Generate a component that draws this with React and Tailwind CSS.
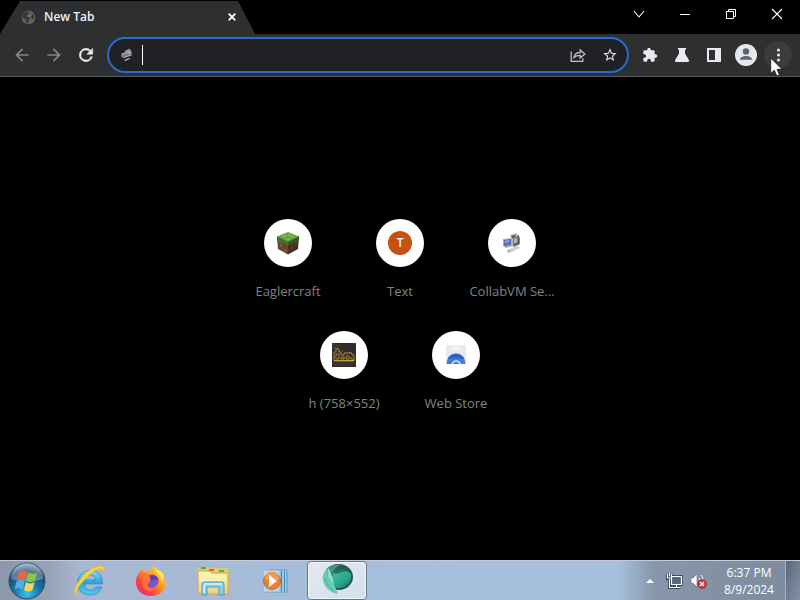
import React from "react";

function Svg({ size, box = 24, className = "", children }) {
  return (
    <svg width={size} height={size} viewBox={`0 0 ${box} ${box}`} className={`shrink-0 ${className}`} fill="currentColor" aria-hidden="true">
      {children}
    </svg>
  );
}

function GlobeIcon() {
  return (
    <Svg size={15} box={16} className="text-[#77797c]">
      <circle cx="8" cy="8" r="7.3" fill="#606264" />
      <path d="M3 3.5C5 1.8 7 1.6 8.5 2L8 4.4 6 5.4 6.2 7.4 9 8 9.6 9.6 8.2 11 7.6 14.4C4.6 13.4 6 10.6 4.4 9.6L1.6 8.4C1.4 6 2 4.4 3 3.5Z" fill="#343638" />
      <path d="M11 3.2L13.4 5 14.2 8.6 12.2 9.6 10.4 7.4 12 6Z" fill="#343638" />
    </Svg>
  );
}

function CaptionButton({ label, children }) {
  return (
    <button type="button" aria-label={label} className="flex h-7 w-[46px] items-center justify-center text-white">
      <svg width="12" height="12" viewBox="0 0 12 12" fill="none" stroke="currentColor" strokeWidth="1" aria-hidden="true">
        {children}
      </svg>
    </button>
  );
}

function TitleBar() {
  return (
    <header className="flex h-[34px] items-start justify-between">
      <div className="flex h-[34px] w-[255px] items-center bg-[#2e2f30] pr-[17px] pl-[21px] [clip-path:polygon(20px_1px,238px_1px,255px_100%,0_100%)]">
        <GlobeIcon />
        <h1 className="ml-2 flex-1 font-['Open_Sans','Noto_Sans',sans-serif] text-xs leading-4 font-semibold text-[#f2f2f2]">New Tab</h1>
        <button type="button" aria-label="Close tab" className="flex size-3 items-center justify-center text-white">
          <svg width="8" height="8" viewBox="0 0 8 8" stroke="currentColor" strokeWidth="1.9" aria-hidden="true">
            <path d="M.7.7l6.6 6.6M7.3.7L.7 7.3" />
          </svg>
        </button>
      </div>
      <div className="flex">
        <CaptionButton label="Search tabs"><path d="M1 3l5 6 5-6" strokeWidth="1.1" /></CaptionButton>
        <CaptionButton label="Minimize"><path d="M1 6.5h10" /></CaptionButton>
        <CaptionButton label="Restore">
          <path d="M1.5 3.5h7v7h-7zM3.5 3.5v-2h7v7h-2" />
        </CaptionButton>
        <CaptionButton label="Close"><path d="M1 1l10 10M11 1L1 11" strokeWidth="1.1" /></CaptionButton>
      </div>
    </header>
  );
}

function ToolButton({ label, className = "", children }) {
  return (
    <button type="button" aria-label={label} className={`flex size-8 shrink-0 items-center justify-center ${className}`}>
      {children}
    </button>
  );
}

function Pointer() {
  return (
    <svg width="14" height="21" viewBox="0 0 14 21" className="pointer-events-none absolute top-[18px] left-2" aria-hidden="true">
      <path d="M.7 1v15.6l3.6-3.4 2.4 5.8 2.8-1.2-2.4-5.5h5z" fill="#fff" stroke="#111" strokeWidth=".8" />
    </svg>
  );
}

function ComputerMark() {
  return (
    <svg width="14" height="14" viewBox="0 0 14 14" className="shrink-0" aria-hidden="true">
      <path d="M5 2.5L10 .6l.8 2L5 5z" fill="#8f8f8f" />
      <path d="M1.500 5.500L10 2.500l1.500 1v4L4 10l-2.500-1z" fill="#a9a9a9" />
      <path d="M2.500 6.200l5-1.800v3l-5 1.600z" fill="#8a8a8a" />
      <path d="M4 12l5-2 1.500.6-5 2.400z" fill="#b5b5b5" />
      <path d="M2 8.500l9-3" stroke="#5a5a5a" strokeWidth=".7" />
    </svg>
  );
}

function Toolbar() {
  return (
    <div className="flex h-[43px] items-center border-b border-[#5b5d5f] bg-[#2e2f30] px-[6px] text-[#e8eaed]">
      <nav className="flex" aria-label="History">
        <ToolButton label="Back" className="text-[#858688]">
          <Svg size={20}><path d="M20 11H7.83l5.59-5.59L12 4l-8 8 8 8 1.41-1.41L7.83 13H20z" /></Svg>
        </ToolButton>
        <ToolButton label="Forward" className="text-[#858688]">
          <Svg size={20}><path d="M12 4l-1.41 1.41L16.17 11H4v2h12.17l-5.58 5.59L12 20l8-8z" /></Svg>
        </ToolButton>
        <ToolButton label="Reload">
          <Svg size={20}><path stroke="currentColor" strokeWidth=".6" d="M17.65 6.35A8 8 0 1 0 19.73 14h-2.08A6 6 0 1 1 12 6c1.66 0 3.14.69 4.22 1.78L13 11h7V4z" /></Svg>
        </ToolButton>
      </nav>
      <div className="mx-[5px] flex h-9 min-w-0 flex-1 items-center rounded-full border-2 border-[#276dcb] bg-[#202124] pr-px pl-[11px]">
        <ComputerMark />
        <span className="ml-2 h-5 w-px shrink-0 bg-white" />
        <input aria-label="Address" className="h-6 min-w-0 flex-1 bg-transparent px-1 text-sm caret-transparent outline-none" />
        <ToolButton label="Share this page" className="text-[#bdc1c6]">
          <svg width="16" height="16" viewBox="0 0 16 16" fill="none" stroke="currentColor" strokeWidth="1.3" aria-hidden="true">
            <path d="M1.2 4.500v9.800h11.600v-3M4 10.500c.4-3.500 2.600-5 6.200-5V3l4.600 4-4.600 4V8.400c-3 0-4.600.4-6.200 2.100z" />
          </svg>
        </ToolButton>
        <ToolButton label="Bookmark this tab" className="text-[#e8eaed]">
          <Svg size={16}><path d="M22 9.24l-7.19-.62L12 2 9.19 8.63 2 9.24l5.46 4.73L5.82 21 12 17.27 18.18 21l-1.63-7.03zM12 15.4l-3.76 2.27 1-4.28-3.32-2.88 4.38-.38L12 6.1l1.71 4.04 4.38.38-3.32 2.88 1 4.28z" /></Svg>
        </ToolButton>
      </div>
      <div className="flex">
        <ToolButton label="Extensions">
          <Svg size={16}><path d="M20.5 11H19V7a2 2 0 0 0-2-2h-4V3.5a2.5 2.5 0 0 0-5 0V5H4a2 2 0 0 0-2 2v3.8h1.5a2.7 2.7 0 0 1 0 5.4H2V20c0 1.1.9 2 2 2h3.8v-1.5a2.7 2.7 0 0 1 5.4 0V22H17a2 2 0 0 0 2-2v-4h1.5a2.5 2.5 0 0 0 0-5z" /></Svg>
        </ToolButton>
        <ToolButton label="Experiments">
          <Svg size={16} box={16}><path d="M4 1h8v1.8h-1V6.5l4 6.8q.6 1.7-1.2 1.7H2.2Q.4 15 1 13.3l4-6.8V2.8H4z" /></Svg>
        </ToolButton>
        <ToolButton label="Side panel">
          <Svg size={14} box={14}><path fillRule="evenodd" d="M0 0h14v14H0zM2 2v10h6V2z" /></Svg>
        </ToolButton>
        <ToolButton label="Profile">
          <Svg size={22} box={22}>
            <circle cx="11" cy="11" r="11" fill="#e6e8eb" />
            <circle cx="11" cy="7.5" r="3.2" fill="#5c6475" />
            <path d="M4.8 15.8c0-2.7 3.8-3.9 6.2-3.9s6.2 1.2 6.2 3.900z" fill="#5c6475" />
          </Svg>
        </ToolButton>
        <div className="relative">
          <ToolButton label="Menu">
            <span className="flex size-7 items-center justify-center rounded-full bg-[#3b3c3e]">
              <Svg size={16} box={16}>
                <circle cx="8.500" cy="3" r="1.500" /><circle cx="8.500" cy="8" r="1.500" /><circle cx="8.500" cy="13" r="1.500" />
              </Svg>
            </span>
          </ToolButton>
          <Pointer />
        </div>
      </div>
    </div>
  );
}

function GrassBlock() {
  return (
    <svg width="24" height="24" viewBox="0 0 24 24" aria-hidden="true">
      <path d="M1 5.5l11 4v14L2 18z" fill="#68452f" />
      <path d="M23 5.5l-11 4v14L22 18z" fill="#4a2e21" />
      <path d="M1 5.5L12 1l11 4.5L12 11z" fill="#69a33e" />
      <path d="M1 5.5L12 11v4l-2-1v-2l-2 1-2-2v2l-2-2v1l-3-2z" fill="#3f7426" />
      <path d="M23 5.5L12 11v4l3-3 1 2 2-3 2 1 3-3z" fill="#315c20" />
      <path d="M6 5l3-1 2 1-3 1zM13 3l3 1-2 1-3-1zM14 7l3-2 2 1-3 1zM10 8l3-1 1 1-2 1z" fill="#83bd55" />
      <path d="M4 13l2 1v2l-2-1zM8 18l2 1v2l-2-1z" fill="#8a6147" />
      <path d="M15 16l2-1v2l-2 1zM19 12l2-1v2l-2 1z" fill="#6c3a2c" />
    </svg>
  );
}

function ComputerCluster() {
  return (
    <svg width="20" height="22" viewBox="0 0 20 22" aria-hidden="true">
      <path d="M8 3l6-2 2 2v4l-5 2z" fill="#b8b5a4" />
      <path d="M9 4l4-1 1 2-3 2z" fill="#555" />
      <path d="M10 6l7-2 1 2v6l-6 3-3-2z" fill="#8a887e" />
      <path d="M12 7l4-1v4l-4 1z" fill="#b6b4a6" />
      <path d="M12 12l4-1v1l-4 2zM15.500 4l1.500-1v9l-1.500 1z" fill="#4f5256" />
      <path d="M1 7l8-1 2 1v7l-7 2-3-2z" fill="#a9abb6" />
      <path d="M2 8l7-1v6l-7 1z" fill="#5a72b8" />
      <path d="M3 9l4-1v2l-4 1z" fill="#8a9fdc" />
      <path d="M5 18l10-4 3 2-9 4-3 1z" fill="#b4b3a8" />
      <path d="M7 18l8-3M8 19l8-3" stroke="#eeeade" strokeWidth=".8" />
    </svg>
  );
}

function TerminalPicture() {
  return (
    <svg width="24" height="24" viewBox="0 0 24 24" aria-hidden="true">
      <path d="M0 0h24v24H0z" fill="#302b2b" />
      <path d="M1 2h7M1 20h21M2 22h17" stroke="#55483b" strokeDasharray="2 1" />
      <g fill="none" stroke="#a1872f" strokeWidth="1">
        <path d="M2 18V9h2V6h3v3h2v3h3v-2h8v2h2v6zM4 11v5h3v-5zM9 14v2h3v-2zM14 13v3h3v-3zM19 14v2h3" />
        <path d="M1 5h5M10 8h2M15 10h6" strokeDasharray="1 1" />
      </g>
      <path d="M2 17.5h20" stroke="#c4a43c" />
    </svg>
  );
}

function StoreIcon() {
  return (
    <svg width="22" height="20" viewBox="0 0 22 20" aria-hidden="true">
      <path d="M1 0h20v19H1z" fill="#e9eaee" />
      <path d="M7 3.5h8" stroke="#fff" strokeWidth="1.5" />
      <path d="M1.5 19a9.5 10.500 0 0 1 19 0z" fill="#427bdc" />
      <path d="M2.500 14a9.500 9.500 0 0 1 17 0l-8.500-1z" fill="#2f62c6" />
      <path d="M6.5 19a4.8 4.8 0 0 1 9.4 0z" fill="#dce9ff" />
      <path d="M8 19a3.2 3.2 0 0 1 6.2 0z" fill="#4285e6" />
    </svg>
  );
}

const shortcuts = [
  { name: "Eaglercraft", icon: <GrassBlock /> },
  { name: "Text", icon: <span className="flex size-6 items-center justify-center rounded-full bg-[#c65211] text-xs font-medium text-white">T</span> },
  { name: "CollabVM Se...", icon: <ComputerCluster /> },
  { name: "h (758×552)", icon: <TerminalPicture /> },
  { name: "Web Store", icon: <StoreIcon /> },
];

function NewTabPage() {
  return (
    <main className="flex flex-1 items-start justify-center pt-[130px]">
      <ul className="flex max-w-[336px] flex-wrap justify-center">
        {shortcuts.map(({ name, icon }) => (
          <li key={name}>
            <a href="#" className="flex h-28 w-28 flex-col items-center pt-3">
              <span className="flex size-12 items-center justify-center rounded-full bg-white">{icon}</span>
              <span className="mt-4 font-['Open_Sans','Noto_Sans',sans-serif] text-[13px] leading-4 whitespace-nowrap text-[#7c8587]">{name}</span>
            </a>
          </li>
        ))}
      </ul>
    </main>
  );
}

function StartOrb() {
  return (
    <svg width="38" height="38" viewBox="0 0 38 38" aria-hidden="true">
      <defs>
        <radialGradient id="orb" cx=".5" cy=".85" r=".85">
          <stop offset="0" stopColor="#36c5ef" /><stop offset=".4" stopColor="#1878ae" /><stop offset=".75" stopColor="#1c4976" /><stop offset="1" stopColor="#8eaec6" />
        </radialGradient>
      </defs>
      <circle cx="19" cy="19" r="18" fill="url(#orb)" stroke="#314d67" />
      <path d="M3 17a16 16 0 0 1 32 0q-16 5-32 0z" fill="#fff" opacity=".28" />
      <path d="M11 10q4-3 8 0l-2 8q-4-3-8 0z" fill="#ed6533" />
      <path d="M20.500 10.500q4 3 8.500 0l-2 8q-4 3-8.500 0z" fill="#8ec63e" />
      <path d="M8.500 19.500q4-3 8 0l-2 8q-4-3-8 0z" fill="#55aee5" />
      <path d="M18 20q4 3 8.500 0l-2 8q-4 3-8.500 0z" fill="#ffd34c" />
    </svg>
  );
}

function BrowserE() {
  return (
    <svg width="32" height="32" viewBox="0 0 32 32" aria-hidden="true">
      <defs><linearGradient id="ie" x2="0" y2="1"><stop stopColor="#80def9" /><stop offset=".5" stopColor="#2ca3df" /><stop offset="1" stopColor="#50cdf2" /></linearGradient></defs>
      <path fillRule="evenodd" d="M29.500 19H11.500q1 6 6 6 3.500 0 5-3h6.300q-2.800 8-11.500 8Q5 29.500 4.500 18 5 6 17 5.500 30 6 29.500 19zM11.500 15h11q-.8-5-5.500-5-4.500 0-5.500 5z" fill="url(#ie)" stroke="#2889bd" strokeWidth=".7" />
      <path d="M4 31C-3 27 6 14 14 7 21 1 30-1 31 3c.5 2-.6 3.500-1.600 4 .3-2 0-3-1.900-3C22 4 10 15 5 23c-2 3-2 5-1 8z" fill="#f5d442" stroke="#d5b730" strokeWidth=".5" />
    </svg>
  );
}

function FoxIcon() {
  return (
    <svg width="32" height="32" viewBox="0 0 32 32" aria-hidden="true">
      <defs>
        <linearGradient id="fox" x1="1" x2="0" y2="1"><stop stopColor="#fff04a" /><stop offset=".4" stopColor="#ff9a21" /><stop offset=".7" stopColor="#fb433e" /><stop offset="1" stopColor="#e72178" /></linearGradient>
      </defs>
      <path d="M4 8l3-4 2 3 5-1 5-5 2 5q6 1 9 9c3 9-5 16-14 16S.5 25 1 16q0-4 3-8z" fill="url(#fox)" />
      <circle cx="17" cy="16" r="6.500" fill="#7653cf" />
      <path d="M4 10q5-3 9-1l2 3 5 1-5 3-3 5q2 4 7 3-4 4-9 0Q5 20 8 12z" fill="#ff7139" />
      <path d="M19 1l3 7q5 4 4 10 5-6 1-11-5-2-8-6z" fill="#ffe34f" />
      <path d="M15 11.500q6-3 8.500 3.500-4-2-8 1z" fill="#5940a4" />
    </svg>
  );
}

function FolderIcon() {
  return (
    <svg width="34" height="32" viewBox="0 0 34 32" aria-hidden="true">
      <defs><linearGradient id="folder" x2="0" y2="1"><stop stopColor="#fff7b7" /><stop offset="1" stopColor="#e8d381" /></linearGradient></defs>
      <path d="M2 3l2-1h7l2 1h18l2 2v23H2z" fill="#e1c97a" />
      <path d="M5 2h5v2H5z" fill="#48ae48" /><path d="M13 4h5v2h-5z" fill="#e05a3d" /><path d="M23 5h5v2h-5z" fill="#58ad62" />
      <path d="M2 6h12l2 2h16v21H2z" fill="url(#folder)" stroke="#c8a64e" />
      <path d="M3 12h27M3 15h27" stroke="#fff7bd" />
      <path d="M6 30V19q0-2 2-2h18q2 0 2 2v11h-5v-8H11v8z" fill="#8acbe9" stroke="#559ab9" />
      <path d="M8 19h18M8 20v8" stroke="#daf6ff" strokeWidth="1.500" />
    </svg>
  );
}

function MediaIcon() {
  return (
    <svg width="26" height="26" viewBox="0 0 26 26" aria-hidden="true">
      <path d="M7 2h18v22H7z" fill="#a3cee9" stroke="#5f99c0" />
      <path d="M22.500 3v20M19.500 3v20" stroke="#3c82b4" />
      <path d="M1 2h17v22H1z" fill="#b9d9eb" stroke="#86b4d0" />
      <circle cx="10" cy="13" r="8.500" fill="#e5812f" stroke="#c06d31" />
      <path d="M2.500 11a7.500 7.500 0 0 1 15 0q-8 3-15 0z" fill="#f9ae66" opacity=".6" />
      <path d="M7 7l8 6-8 6z" fill="#fff" />
    </svg>
  );
}

function SwirlIcon() {
  return (
    <svg width="34" height="32" viewBox="0 0 34 32" aria-hidden="true">
      <defs>
        <radialGradient id="shell" cx=".55" cy=".5"><stop stopColor="#2f8877" /><stop offset=".7" stopColor="#236558" /><stop offset="1" stopColor="#1c4d48" /></radialGradient>
        <linearGradient id="pearl" x2="1" y2="1"><stop stopColor="#43c4a6" /><stop offset=".6" stopColor="#2aa48c" /><stop offset="1" stopColor="#1b6b61" /></linearGradient>
      </defs>
      <ellipse cx="18.500" cy="14" rx="14.500" ry="13" fill="url(#shell)" />
      <path d="M6 6Q13 0 22 2q-7 1-9 8z" fill="#4a8f7d" />
      <path d="M13 10q5 2 9-1 6-2 9 2 1 9-7 13-7 3-13-2z" fill="url(#pearl)" />
      <path d="M8 5q-3 10 6 17 2 3 4 9-8-1-13-8Q-1 13 8 5z" fill="#69cdb2" />
      <path d="M8 5q4 4 6 17-9-7-6-17z" fill="#8bdcc6" />
      <path d="M5 15q2 8 9 13" fill="none" stroke="#43ad93" />
    </svg>
  );
}

const pinned = [
  { name: "Internet Explorer", icon: <BrowserE /> },
  { name: "Firefox", icon: <FoxIcon /> },
  { name: "Windows Explorer", icon: <FolderIcon /> },
  { name: "Windows Media Player", icon: <MediaIcon /> },
  { name: "New Tab", icon: <SwirlIcon />, active: true },
];

function Taskbar() {
  return (
    <footer className="flex h-10 items-stretch justify-between border-t border-[#c5cbdc] bg-[linear-gradient(to_right,#8c97a9,#96a2b6_6%,#a9b6d0_10%,#a5bedb_40%,#a6c1de)]">
      <div className="flex items-center">
        <button type="button" aria-label="Start" className="mr-[5px] flex w-[54px] justify-center"><StartOrb /></button>
        <div className="flex gap-0.5">
          {pinned.map(({ name, icon, active }) => (
            <button
              key={name}
              type="button"
              aria-label={name}
              className={`flex h-[39px] w-[60px] justify-center ${active ? "items-start rounded-sm border border-[#65798c] bg-linear-to-br from-[#e4e9f2] to-[#d3dfeb] pt-px shadow-[inset_0_0_0_1px_#f3f8fc]" : "items-center"}`}
            >
              {icon}
            </button>
          ))}
        </div>
      </div>
      <div className="flex items-center bg-linear-to-r from-transparent via-[#8796aa] via-20% to-[#7e8b9e] pl-5 text-white">
        <button type="button" aria-label="Show hidden icons" className="flex h-8 w-6 items-center justify-center">
          <svg width="8" height="4" viewBox="0 0 8 4" aria-hidden="true"><path d="M0 4l4-4 4 4z" fill="#fff" /></svg>
        </button>
        <button type="button" aria-label="Network" className="flex h-8 w-6 items-center justify-center">
          <svg width="17" height="16" viewBox="0 0 17 16" fill="none" aria-hidden="true">
            <path d="M5.500 3.500h10v8h-10zM10.500 12v2.500M6.500 14.500h8M3.500 6v8.500h4M1.500 1v5h4V1M3.500 0v3" stroke="#263442" strokeWidth="2.500" />
            <path d="M5.500 3.500h10v8h-10z" fill="#56677b" />
            <path d="M5.500 3.500h10v8h-10zM10.500 12v2.500M6.500 14.500h8M3.500 6v8.500h4M1.500 1v4h4V1M3.500 0v3" stroke="#fff" strokeWidth="1.200" />
          </svg>
        </button>
        <button type="button" aria-label="Volume muted" className="flex h-8 w-6 items-center justify-center">
          <svg width="17" height="16" viewBox="0 0 17 16" aria-hidden="true">
            <path d="M1 5h2l4-4v13l-4-4H1z" fill="#fff" stroke="#536173" strokeWidth=".5" />
            <path d="M9 5q2 3 0 6M11 2q4 5 0 10" fill="none" stroke="#fff" />
            <circle cx="12" cy="11" r="4.600" fill="#d62f36" stroke="#a51c23" strokeWidth=".5" />
            <path d="M10 9l4 4M14 9l-4 4" stroke="#fff" strokeWidth="1.400" />
          </svg>
        </button>
        <button type="button" className="flex w-[75px] flex-col items-center pl-[3px] font-['Open_Sans','Noto_Sans',sans-serif] text-xs leading-[17px]">
          <time dateTime="18:37">6:37 PM</time>
          <time dateTime="2024-08-09">8/9/2024</time>
        </button>
        <button type="button" aria-label="Show desktop" className="h-full w-[15px] border-l border-[#abb5c3] bg-linear-to-br from-[#59697b] via-[#6f7e91] to-[#8492a4]" />
      </div>
    </footer>
  );
}

export default function App() {
  return (
    <div className="flex min-h-screen flex-col bg-black font-['Noto_Sans','Open_Sans',sans-serif]">
      <TitleBar />
      <Toolbar />
      <NewTabPage />
      <Taskbar />
    </div>
  );
}
